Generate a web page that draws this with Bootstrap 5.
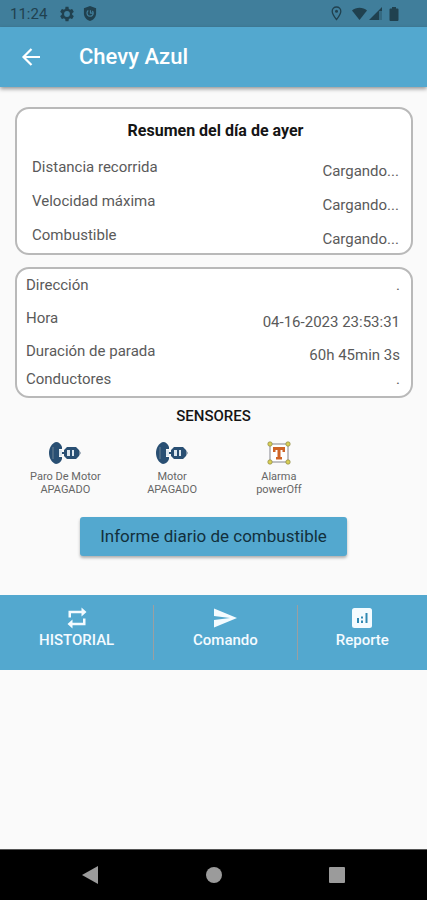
<!DOCTYPE html>
<html lang="es">
<head>
<meta charset="utf-8">
<meta name="viewport" content="width=device-width, initial-scale=1">
<title>Chevy Azul</title>
<link href="https://cdn.jsdelivr.net/npm/bootstrap@5.3.0/dist/css/bootstrap.min.css" rel="stylesheet">
<style>
:root { --sky: #53a8cf; }
body { font-family: Roboto, "Liberation Sans", sans-serif; background: #fafafa; color: #5a5a5a; font-size: 15px; line-height: 20px; }
svg { display: block; flex: none; }
.status-bar { background: #407e9b; color: #20414f; height: 27px; padding: 0 28px 0 10px; }
.status-bar .clock { width: 38px; margin-right: 11px; }
.top-bar { background: var(--sky); height: 60px; padding-left: 20px; box-shadow: 0 2px 4px rgba(0,0,0,.4); }
.top-bar h1 { font-size: 22px; line-height: 28px; font-weight: 500; margin-left: 37px; }
.info-card { border: 2px solid #b9b9b9; border-radius: 14px; background: #fff; margin: 0 14px 0 15px; }
.info-card dt { font-weight: inherit; }
.info-card dl > div { height: 24px; }
.summary { margin-top: 20px; padding: 12px 12px 4px 15px; }
.summary h2 { font-size: 16px; line-height: 20px; font-weight: 700; color: #151515; margin-bottom: 16px; }
.summary dl { gap: 10px; }
.detail { margin-top: 12px; padding: 6px 11px 3px 9px; }
.detail dl { gap: 9px; }
.detail dl > div:last-child { margin-top: -5px; }
.sensors-title { font-size: 15px; line-height: 20px; font-weight: 500; color: #151515; margin-top: 8px; }
.sensors { font-size: 11px; line-height: 13px; margin: 15px 0 0 12px; color: #666; }
.sensor { width: 25vw; gap: 5px; }
.btn-fuel { background: var(--sky); color: #12303d; font-size: 17px; line-height: 27px; border: 0; border-radius: 3px; padding: 6px 20px; box-shadow: 0 2px 3px rgba(0,0,0,.3); margin-top: 21px; }
.btn-fuel:hover { background: #479bc2; }
.actions { background: var(--sky); height: 75px; margin-top: 39px; padding: 10px 0; font-weight: 500; }
.actions button { color: #f4fbff; padding: 1px 0 0; font-weight: inherit; border: 0; background: transparent; }
.actions button + button { border-left: 1px solid #9a9fa2; }
.act-history { flex: 154; } .act-command { flex: 143; } .act-report { flex: 130; }
.system-nav { height: 51px; background: #000; border-top: 1px solid #555; padding: 0 81px; }
.system-nav button { color: #9b9b9b; }
</style>
<script src="https://cdn.jsdelivr.net/npm/bootstrap@5.3.0/dist/js/bootstrap.bundle.min.js"></script>
</head>
<body class="d-flex flex-column min-vh-100">
<div class="status-bar d-flex align-items-center">
  <span class="clock">11:24</span>
  <svg class="me-2" width="16" height="16" viewBox="1 1 22 22" fill="currentColor"><path fill-rule="evenodd" d="M19.1 13a7 7 0 0 0 0-2l2.1-1.6c.2-.1.2-.4.1-.6l-2-3.500c-.1-.2-.3-.3-.6-.2l-2.500 1a7 7 0 0 0-1.700-1L14.100 2.400c0-.2-.2-.4-.5-.4h-3.200c-.3 0-.5.2-.5.4l-.4 2.700a7 7 0 0 0-1.700 1l-2.500-1c-.3-.1-.5 0-.6.2l-2 3.500c-.1.2-.1.500.1.6L4.900 11a7 7 0 0 0 0 2l-2.100 1.600c-.2.100-.2.400-.1.600l2 3.500c.1.200.3.300.6.200l2.500-1a7 7 0 0 0 1.700 1l.4 2.700c0 .2.2.4.5.4h3.200c.3 0 .5-.2.500-.4l.4-2.700a7 7 0 0 0 1.700-1l2.500 1c.3.1.500 0 .6-.2l2-3.500c.1-.2.100-.5-.1-.6zM12 8a4 4 0 1 1 0 8 4 4 0 0 1 0-8z"/></svg>
  <svg width="14" height="15" viewBox="0 0 14 16"><path fill="currentColor" d="M7 0l6.500 2.500V8c0 4-3 7-6.500 8C3.500 15 .5 12 .5 8V2.500z"/><path d="M9.500 5.300a3.300 3.300 0 1 1-4.300-.4M7.500 4.500v3h3" fill="none" stroke="#407e9b" stroke-width="1.300"/></svg>
  <svg class="ms-auto" width="11" height="15" viewBox="0 0 11 15"><path d="M5.500 1C3 1 1.200 2.900 1.200 5.200c0 3 4.300 8.300 4.300 8.300s4.300-5.300 4.300-8.300C9.800 2.900 8 1 5.500 1z" fill="none" stroke="currentColor" stroke-width="1.300"/><circle cx="5.500" cy="5.300" r="1.500" fill="currentColor"/></svg>
  <svg class="ms-2 me-1" width="35" height="14" viewBox="0 0 35 14" fill="currentColor"><path d="M2 3.500C6-.1 13-.1 17 3.500L9.500 13z"/><path d="M19 13L32 0v4h-3v9z"/><path d="M29 4h3v9h-3z" opacity=".35"/></svg>
  <svg width="10" height="14" viewBox="0 0 10 14" fill="currentColor"><path d="M3 0h4v1.500h1.500q1 0 1 1V13q0 1-1 1h-7q-1 0-1-1V2.500q0-1 1-1H3z"/></svg>
</div>
<header class="top-bar d-flex align-items-center text-white">
  <button class="btn p-0 border-0 text-white" type="button" aria-label="Volver"><svg width="22" height="22" viewBox="0 0 22 22" fill="none" stroke="currentColor" stroke-width="2.200"><path d="M20 11H4M11.500 3L3.500 11l8 8"/></svg></button>
  <h1 class="mb-0">Chevy Azul</h1>
</header>
<main class="flex-grow-1">
  <section class="info-card summary">
    <h2 class="text-center">Resumen del día de ayer</h2>
    <dl class="d-flex flex-column mb-0">
      <div class="d-flex justify-content-between"><dt>Distancia recorrida</dt><dd class="mb-0 align-self-end">Cargando...</dd></div>
      <div class="d-flex justify-content-between"><dt>Velocidad máxima</dt><dd class="mb-0 align-self-end">Cargando...</dd></div>
      <div class="d-flex justify-content-between"><dt>Combustible</dt><dd class="mb-0 align-self-end">Cargando...</dd></div>
    </dl>
  </section>
  <section class="info-card detail">
    <dl class="d-flex flex-column mb-0">
      <div class="d-flex justify-content-between"><dt>Dirección</dt><dd class="mb-0">.</dd></div>
      <div class="d-flex justify-content-between"><dt>Hora</dt><dd class="mb-0 align-self-end">04-16-2023 23:53:31</dd></div>
      <div class="d-flex justify-content-between"><dt>Duración de parada</dt><dd class="mb-0 align-self-end">60h 45min 3s</dd></div>
      <div class="d-flex justify-content-between"><dt>Conductores</dt><dd class="mb-0">.</dd></div>
    </dl>
  </section>
  <h2 class="sensors-title text-center mb-0">SENSORES</h2>
  <svg class="d-none" aria-hidden="true"><symbol id="engine" viewBox="0 0 34 24"><g fill="#294f73"><path d="M8 1C4 2 1 7 1 12s3 10 7 11c3-.3 5-2 6-5v-2h-3V8h3V6c-1-3-3-5-6-5z"/><path d="M19 6h9l3 3v6l-3 3h-9l-3-3v-2h-4v-2h4V9z"/></g><path fill="#dce6ee" d="M11 9h3v6h-3zM19 9h3v6h-3zm5 0h2v6h-2z"/><path fill="#8394a5" d="M31 9l2 3-2 3z"/><path d="M5 6v12" stroke="#6d8294"/></symbol></svg>
  <div class="sensors d-flex text-center">
    <div class="sensor d-flex flex-column align-items-center"><svg width="34" height="24"><use href="#engine"/></svg><div>Paro De Motor<br>APAGADO</div></div>
    <div class="sensor d-flex flex-column align-items-center"><svg width="34" height="24"><use href="#engine"/></svg><div>Motor<br>APAGADO</div></div>
    <div class="sensor d-flex flex-column align-items-center"><svg width="24" height="24" viewBox="0 0 24 24"><path d="M3 3h18v18H3z" fill="#fff" stroke="#85858c"/><path d="M6 6h12v5h-2.500V9h-2v7H15v2.500H9V16h1.500V9h-2v2H6z" fill="#cf6427"/><g fill="#d9cf55" stroke="#8d8740" stroke-width=".7"><circle cx="3" cy="3" r="2.200"/><circle cx="21" cy="3" r="2.200"/><circle cx="3" cy="21" r="2.200"/><circle cx="21" cy="21" r="2.200"/></g></svg><div>Alarma<br>powerOff</div></div>
  </div>
  <div class="text-center"><button class="btn btn-fuel" type="button">Informe diario de combustible</button></div>
  <div class="actions d-flex">
    <button type="button" class="act-history d-flex flex-column align-items-center"><svg width="24" height="24" viewBox="0 0 24 24" fill="currentColor"><path d="M6 7.200H16.500v3.300l5-4.500-5-4.500v3.300H3.500v6.700H6zM18 16.800H7.500v-3.300l-5 4.500 5 4.500v-3.300h13v-6.700H18z"/></svg>HISTORIAL</button>
    <button type="button" class="act-command d-flex flex-column align-items-center"><svg width="26" height="24" viewBox="0 0 26 24" fill="currentColor"><path d="M2 2.500L25 12 2 21.500V14l16-2L2 10z"/></svg>Comando</button>
    <button type="button" class="act-report d-flex flex-column align-items-center"><svg width="24" height="24" viewBox="0 0 24 24"><rect x="2" y="2" width="20" height="20" rx="2.500" fill="currentColor"/><path d="M7 12h2v5H7zm4 2.500h2V17h-2zm0-4h2v2h-2zM15.500 7h2v10h-2z" fill="#3189b3"/></svg>Reporte</button>
  </div>
</main>
<nav class="system-nav d-flex align-items-center justify-content-between" aria-label="Sistema">
  <button class="btn p-0 border-0" type="button" aria-label="Atrás"><svg width="18" height="20" viewBox="0 0 18 20" fill="currentColor"><path d="M17 1v18L1 10z"/></svg></button>
  <button class="btn p-0 border-0" type="button" aria-label="Inicio"><svg width="18" height="18" viewBox="0 0 18 18" fill="currentColor"><circle cx="9" cy="9" r="8"/></svg></button>
  <button class="btn p-0 border-0" type="button" aria-label="Recientes"><svg width="18" height="18" viewBox="0 0 18 18" fill="currentColor"><rect x="1" y="1" width="16" height="16" rx="1"/></svg></button>
</nav>
</body>
</html>
